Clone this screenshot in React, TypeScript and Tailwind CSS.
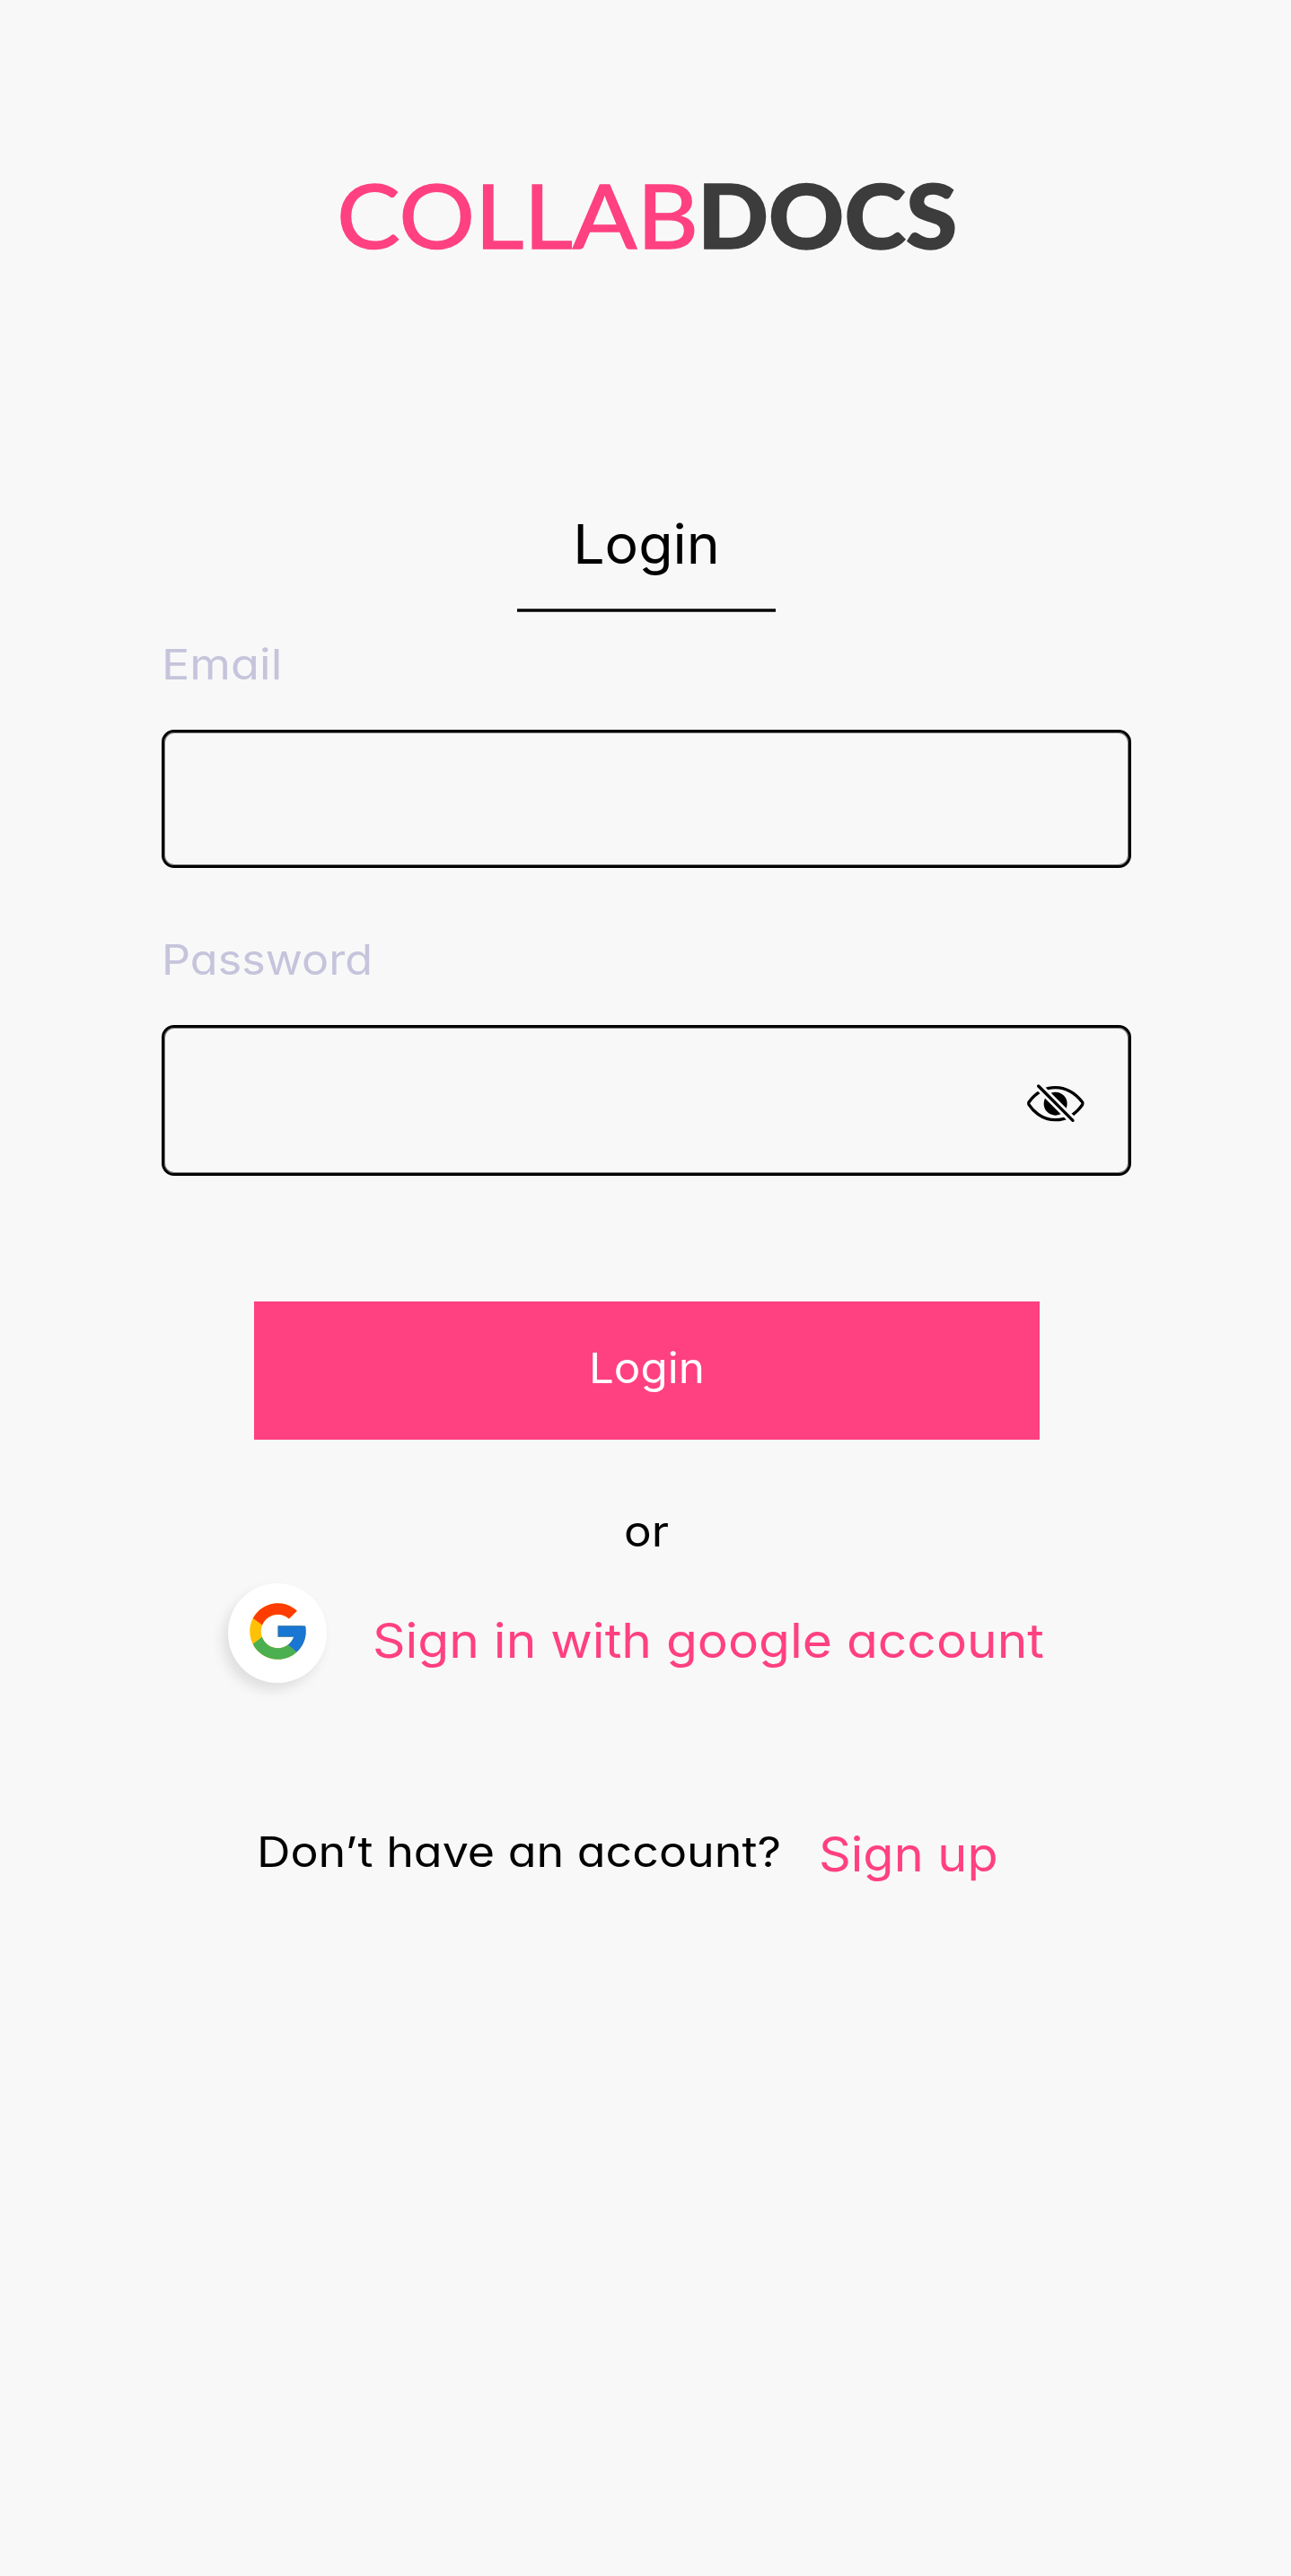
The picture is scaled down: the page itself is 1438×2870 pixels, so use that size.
import { FcGoogle } from "react-icons/fc";

function EyeOffIcon() {
  return (
    <svg viewBox="70 230 198 132" className="h-[44px] w-[66px]" fill="none">
      <defs>
        <mask id="slash" maskUnits="userSpaceOnUse" x="60" y="220" width="220" height="150">
          <rect x="60" y="220" width="220" height="150" fill="white" />
          <path d="M91 219 246 374" stroke="black" strokeWidth="27" />
        </mask>
      </defs>
      <g mask="url(#slash)">
        <path
          d="M79 293C90 278 120 244 168 244S246 278 258 293Q260 297 258 301C246 318 216 352 168 352S90 318 79 301Q77 297 79 293Z"
          stroke="black"
          strokeWidth="10"
        />
        <circle cx="168" cy="298" r="39" fill="black" />
      </g>
      <path d="M111 239 226 354" stroke="black" strokeWidth="10" strokeLinecap="round" />
    </svg>
  );
}

export default function App() {
  return (
    <main className="h-[2870px] w-[1438px] overflow-hidden bg-[#f8f8f8] pt-[189px] font-[Inter,sans-serif] text-black [font-feature-settings:'cv11']">
      <div className="ml-[180px] flex w-[1080px] flex-col">
        <h1 className="flex h-[100px] items-center pl-[195px] font-[Lato,sans-serif] text-[99px] leading-[100px] whitespace-nowrap">
          <span className="origin-left scale-x-[1.07] text-[#ff4081] [-webkit-text-stroke:1.4px_#ff4081]">COLLAB</span>
          <span className="ml-[25px] origin-left scale-x-[1.05] font-black text-[#3c3c3c] [-webkit-text-stroke:1.4px_#3c3c3c]">DOCS</span>
        </h1>

        <h2 className="mt-[277px] scale-x-[1.027] text-center text-[61px] leading-[80px]">Login</h2>
        <div className="mt-8 h-1 w-[288px] self-center border-y border-[#444] bg-black" />

        <label className="mt-7 origin-left scale-x-[1.11] self-start text-[47px] leading-[60px] text-[#c5c4dc]">Email</label>
        <div className="mt-[43px] h-[154px] rounded-[14px] border-[3px] border-black shadow-[inset_0_0_0_1px_#777]" />

        <label className="mt-[72px] origin-left scale-x-[1.07] self-start text-[47px] leading-[60px] text-[#c5c4dc]">Password</label>
        <div className="mt-[43px] flex h-[168px] items-center justify-end rounded-[14px] border-[3px] border-black pt-[5px] pr-[48px] shadow-[inset_0_0_0_1px_#777]">
          <EyeOffIcon />
        </div>

        <button className="mt-[140px] h-[154px] w-[875px] self-center bg-[#ff4081] pb-[6px] text-[47px] text-white">
          <span className="inline-block scale-x-[1.05]">Login</span>
        </button>

        <p className="mt-[72px] scale-x-[1.09] text-center text-[47px] leading-[60px]">or</p>

        <div className="mt-7 flex h-[111px] items-center pl-[74px]">
          <span className="flex h-[111px] w-[110px] items-center justify-center rounded-full bg-white pb-1 shadow-[-6px_8px_14px_rgba(0,0,0,0.1)]">
            <FcGoogle className="size-[75px]" />
          </span>
          <a className="ml-[51px] origin-left scale-x-[1.074] pt-[17px] text-[53px] leading-[60px] whitespace-nowrap text-[#ff4081]">
            Sign in with google account
          </a>
        </div>

        <div className="mt-[158px] flex h-[66px] items-start pl-[106px] whitespace-nowrap">
          <span className="origin-left scale-x-[1.105] text-[47px] leading-[60px]">Don’t have an account?</span>
          <a className="ml-[97px] origin-left scale-x-[1.054] pt-[3px] text-[53px] leading-[60px] text-[#ff4081]">Sign up</a>
        </div>
      </div>
    </main>
  );
}
